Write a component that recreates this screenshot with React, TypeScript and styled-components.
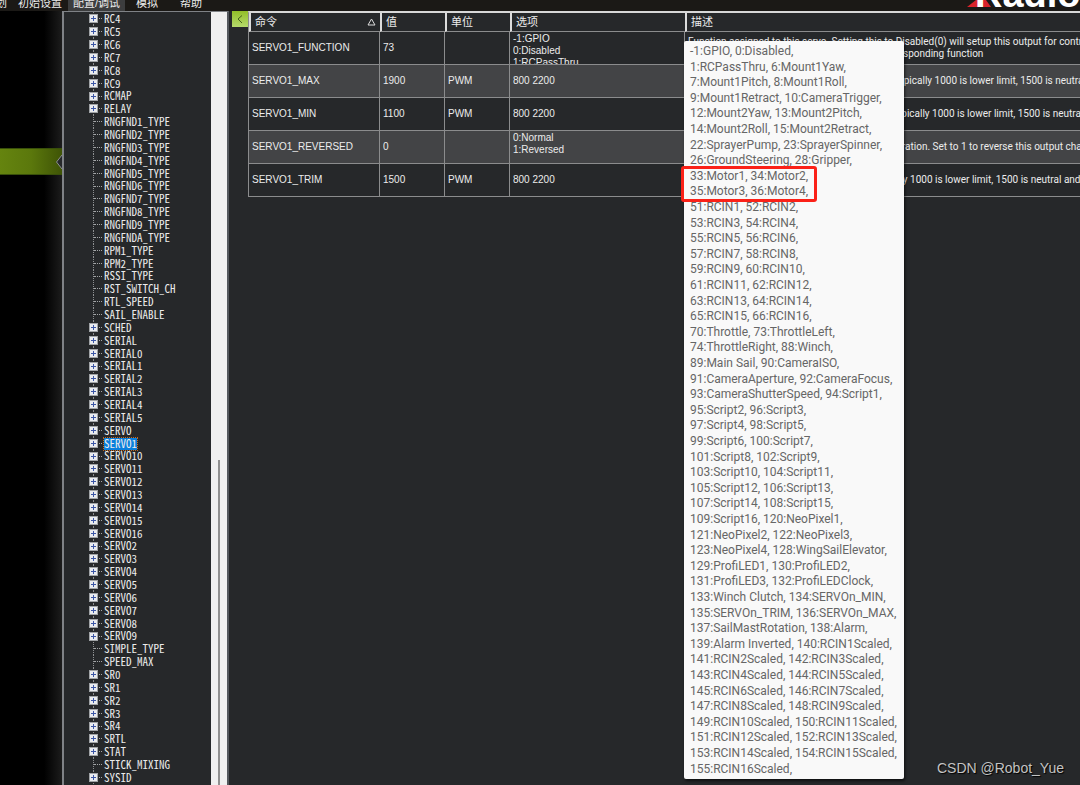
import React from "react";
import styled, { createGlobalStyle } from "styled-components";

const ui = `"Liberation Sans", "Noto Sans CJK SC", sans-serif`;
const line = "#8b8c8d";

const GlobalStyle = createGlobalStyle`
  * { box-sizing: border-box; }
  body { margin: 0; background: #26282a; color: #ececec; font: 10px/12px ${ui}; }
  button { font: inherit; color: inherit; border: 0; padding: 0; background: none; }
`;

const Shell = styled.div`
  position: relative;
  display: flex;
  flex-direction: column;
  height: 100vh;
  overflow: hidden;
`;

const TopBar = styled.header`
  flex: none;
  display: flex;
  justify-content: space-between;
  height: 11px;
  overflow: hidden;
  background: #1b1916;
`;

const Menu = styled.nav`
  display: flex;
  align-items: flex-end;
`;

const MenuItem = styled.button<{ $active?: boolean; $cut?: boolean }>`
  flex: none;
  display: flex;
  justify-content: flex-end;
  height: 16px;
  margin-left: ${(p) => (p.$active ? -5 : 0)}px;
  padding: 0 ${(p) => (p.$cut ? 0 : p.$active ? 5 : 11)}px;
  width: ${(p) => (p.$cut ? "7px" : "auto")};
  font-size: 11px;
  line-height: 16px;
  white-space: nowrap;
  background: ${(p) => (p.$active ? "#3c3d3e" : "none")};
`;

const Logo = styled.div`
  display: flex;
  align-items: flex-end;
  width: 113px;
  svg { flex: none; }
`;

const LogoText = styled.span`
  margin-left: -16px;
  font: bold 38px/34px ${ui};
  color: #fff;
`;

const Body = styled.div`
  flex: 1;
  display: flex;
  min-height: 0;
`;

const Sidebar = styled.aside`
  flex: none;
  width: 62px;
  padding-top: 137px;
  background: linear-gradient(90deg, #000 44px, #1c1c1c);
`;

const ActiveTab = styled.div`
  display: flex;
  align-items: center;
  justify-content: flex-end;
  height: 27px;
  border: solid #39500a;
  border-width: 1px 0;
  background: linear-gradient(90deg, #65840f, #5b780c 50%, #3f5406);
`;

const TreePanel = styled.section`
  flex: none;
  display: flex;
  width: 167px;
  border: solid #7f8286;
  border-width: 1px 2px 0;
  border-right-color: #54585d;
`;

const TreeList = styled.ul`
  flex: 1;
  margin: 0;
  padding: 0 0 0 25px;
  list-style: none;
`;

const TreeRow = styled.li`
  display: flex;
  align-items: center;
  height: 13px;
  background: linear-gradient(#8d8f91 50%, transparent 50%) 4px 0 / 1px 2px repeat-y;
  &:nth-child(7n) { height: 12px; }
`;

const Expander = styled.button`
  display: flex;
  width: 9px;
  height: 9px;
  background: #e9ebee;
  border: 1px solid #a0a3a6;
`;

const Dots = styled.span<{ $leaf: boolean }>`
  width: ${(p) => (p.$leaf ? 8 : 3)}px;
  margin: 0 2px 0 ${(p) => (p.$leaf ? 5 : 1)}px;
  border-top: 1px dotted #a3a5a7;
`;

const NodeName = styled.span<{ $selected: boolean }>`
  height: 12px;
  font: 11px/11px "Noto Sans Mono CJK SC", "Liberation Mono", monospace;
  background: ${(p) => (p.$selected ? "#0a7fdc" : "none")};
  outline: ${(p) => (p.$selected ? "1px dotted #c06a24" : "none")};
`;

const ScrollTrack = styled.div`
  display: flex;
  justify-content: center;
  width: 16px;
  padding-top: 448px;
  background: #f0f0f0;
`;

const ScrollThumb = styled.div`
  width: 2px;
  background: #909090;
`;

const Main = styled.main`
  flex: 1;
  display: flex;
  align-items: flex-start;
  min-width: 0;
  padding-left: 3px;
`;

const Collapse = styled.button`
  flex: none;
  display: flex;
  align-items: center;
  justify-content: center;
  width: 16px;
  height: 16px;
  background: linear-gradient(#92be28, #b5da6c);
`;

const ParamTable = styled.table`
  flex: 1;
  min-width: 0;
  width: 100%;
  table-layout: fixed;
  border-collapse: separate;
  border-spacing: 0;
  border-top: 2px solid #d8d8d8;
  border-left: 1px solid ${line};
`;

const Th = styled.th<{ $w?: number }>`
  width: ${(p) => (p.$w ? p.$w + "px" : "auto")};
  height: 19px;
  padding: 0 4px;
  border-left: 2px solid #dcdcdc;
  border-bottom: 1px solid ${line};
  font-size: 11px;
  font-weight: normal;
  text-align: left;
`;

const ThInner = styled.div`
  display: flex;
  justify-content: space-between;
  align-items: center;
`;

const Tr = styled.tr`
  &:nth-child(even) { background: #434446; }
`;

const Td = styled.td`
  height: 33px;
  padding: 0 0 0 3px;
  border-right: 1px solid ${line};
  border-bottom: 1px solid ${line};
  &:last-child {
    border-right: 0;
    font-family: Roboto, sans-serif;
  }
`;

const Clip = styled.div<{ $top?: boolean }>`
  display: flex;
  flex-direction: column;
  justify-content: ${(p) => (p.$top ? "flex-start" : "center")};
  height: 32px;
  padding-top: ${(p) => (p.$top ? 1 : 0)}px;
  overflow: hidden;
  white-space: pre;
`;

const Tooltip = styled.div`
  position: absolute;
  left: 684px;
  top: 41px;
  width: 220px;
  padding: 2px 6px 3px;
  border-radius: 2px;
  background: #f9f9f9;
  color: #666;
  font: 12px/16px Roboto, sans-serif;
  white-space: nowrap;
  box-shadow: 1px 2px 3px rgba(0, 0, 0, 0.6);
`;

const TipLine = styled.div`
  height: 16px;
  &:nth-child(5n + 2), &:nth-child(5n + 4) { height: 15px; }
`;

const Mark = styled.div`
  position: absolute;
  left: -3px;
  top: 125px;
  width: 136px;
  height: 36px;
  border: 3px solid #fb2118;
  border-radius: 3px;
`;

const Watermark = styled.div`
  position: absolute;
  right: 16px;
  bottom: 8px;
  font: 14px/18px ${ui};
  color: #c3c3c3;
  text-shadow: 1px 1px 1px #000;
`;

const groups = new Set(
  ("RC4 RC5 RC6 RC7 RC8 RC9 RCMAP RELAY SCHED SERIAL SERIAL0 SERIAL1 SERIAL2 SERIAL3 SERIAL4 SERIAL5 SERVO SERVO1 " +
    "SERVO10 SERVO11 SERVO12 SERVO13 SERVO14 SERVO15 SERVO16 SERVO2 SERVO3 SERVO4 SERVO5 SERVO6 SERVO7 SERVO8 SERVO9 " +
    "SR0 SR1 SR2 SR3 SR4 SRTL STAT SYSID").split(" ")
);

const nodes = (
  "RC4 RC5 RC6 RC7 RC8 RC9 RCMAP RELAY RNGFND1_TYPE RNGFND2_TYPE RNGFND3_TYPE RNGFND4_TYPE RNGFND5_TYPE RNGFND6_TYPE " +
  "RNGFND7_TYPE RNGFND8_TYPE RNGFND9_TYPE RNGFNDA_TYPE RPM1_TYPE RPM2_TYPE RSSI_TYPE RST_SWITCH_CH RTL_SPEED SAIL_ENABLE " +
  "SCHED SERIAL SERIAL0 SERIAL1 SERIAL2 SERIAL3 SERIAL4 SERIAL5 SERVO SERVO1 SERVO10 SERVO11 SERVO12 SERVO13 SERVO14 " +
  "SERVO15 SERVO16 SERVO2 SERVO3 SERVO4 SERVO5 SERVO6 SERVO7 SERVO8 SERVO9 SIMPLE_TYPE SPEED_MAX SR0 SR1 SR2 SR3 SR4 " +
  "SRTL STAT STICK_MIXING SYSID"
).split(" ");

const params = [
  { name: "SERVO1_FUNCTION", value: "73", unit: "", options: "-1:GPIO\n0:Disabled\n1:RCPassThru",
    text: "Function assigned to this servo. Setting this to Disabled(0) will setup this output for control by auto missions\nor MAVLink. any other value will enable the corresponding function" },
  { name: "SERVO1_MAX", value: "1900", unit: "PWM", options: "800 2200",
    text: "maximum PWM pulse width in microseconds. Typically 1000 is lower limit, 1500 is neutral and 2000 is upper limit." },
  { name: "SERVO1_MIN", value: "1100", unit: "PWM", options: "800 2200",
    text: "minimum PWM pulse width in microseconds. Typically 1000 is lower limit, 1500 is neutral and 2000 is upper limit." },
  { name: "SERVO1_REVERSED", value: "0", unit: "", options: "0:Normal\n1:Reversed",
    text: "Reverse servo operation. Set to 0 for normal operation. Set to 1 to reverse this output channel." },
  { name: "SERVO1_TRIM", value: "1500", unit: "PWM", options: "800 2200",
    text: "Trim PWM pulse width in microseconds. Typically 1000 is lower limit, 1500 is neutral and 2000 is upper limit." },
];

const functions = [
  "-1:GPIO, 0:Disabled,", "1:RCPassThru, 6:Mount1Yaw,", "7:Mount1Pitch, 8:Mount1Roll,", "9:Mount1Retract, 10:CameraTrigger,",
  "12:Mount2Yaw, 13:Mount2Pitch,", "14:Mount2Roll, 15:Mount2Retract,", "22:SprayerPump, 23:SprayerSpinner,",
  "26:GroundSteering, 28:Gripper,", "33:Motor1, 34:Motor2,", "35:Motor3, 36:Motor4,", "51:RCIN1, 52:RCIN2,",
  "53:RCIN3, 54:RCIN4,", "55:RCIN5, 56:RCIN6,", "57:RCIN7, 58:RCIN8,", "59:RCIN9, 60:RCIN10,", "61:RCIN11, 62:RCIN12,",
  "63:RCIN13, 64:RCIN14,", "65:RCIN15, 66:RCIN16,", "70:Throttle, 73:ThrottleLeft,", "74:ThrottleRight, 88:Winch,",
  "89:Main Sail, 90:CameraISO,", "91:CameraAperture, 92:CameraFocus,", "93:CameraShutterSpeed, 94:Script1,",
  "95:Script2, 96:Script3,", "97:Script4, 98:Script5,", "99:Script6, 100:Script7,", "101:Script8, 102:Script9,",
  "103:Script10, 104:Script11,", "105:Script12, 106:Script13,", "107:Script14, 108:Script15,", "109:Script16, 120:NeoPixel1,",
  "121:NeoPixel2, 122:NeoPixel3,", "123:NeoPixel4, 128:WingSailElevator,", "129:ProfiLED1, 130:ProfiLED2,",
  "131:ProfiLED3, 132:ProfiLEDClock,", "133:Winch Clutch, 134:SERVOn_MIN,", "135:SERVOn_TRIM, 136:SERVOn_MAX,",
  "137:SailMastRotation, 138:Alarm,", "139:Alarm Inverted, 140:RCIN1Scaled,", "141:RCIN2Scaled, 142:RCIN3Scaled,",
  "143:RCIN4Scaled, 144:RCIN5Scaled,", "145:RCIN6Scaled, 146:RCIN7Scaled,", "147:RCIN8Scaled, 148:RCIN9Scaled,",
  "149:RCIN10Scaled, 150:RCIN11Scaled,", "151:RCIN12Scaled, 152:RCIN13Scaled,", "153:RCIN14Scaled, 154:RCIN15Scaled,",
  "155:RCIN16Scaled,",
];

export default function App() {
  return (
    <Shell>
      <GlobalStyle />
      <TopBar>
        <Menu>
          <MenuItem $cut>划</MenuItem>
          <MenuItem>初始设置</MenuItem>
          <MenuItem $active>配置/调试</MenuItem>
          <MenuItem>模拟</MenuItem>
          <MenuItem>帮助</MenuItem>
        </Menu>
        <Logo>
          <svg width="24" height="11" viewBox="0 0 24 11"><path d="M0 7 L9 0 H19 L24 7 Z" fill="#d9242c" /></svg>
          <LogoText>Radio</LogoText>
        </Logo>
      </TopBar>
      <Body>
        <Sidebar>
          <ActiveTab>
            <svg width="6" height="14" viewBox="0 0 6 14"><path d="M6 0 L0.5 7 L6 14" fill="#26282a" stroke="#8d9093" /></svg>
          </ActiveTab>
        </Sidebar>
        <TreePanel>
          <TreeList role="tree">
            {nodes.map((n) => (
              <TreeRow key={n} role="treeitem" aria-selected={n === "SERVO1"}>
                {groups.has(n) && (
                  <Expander aria-label={"Expand " + n}>
                    <svg width="7" height="7" viewBox="0 0 7 7"><path d="M1 3.5H6M3.5 1V6" stroke="#3a55a5" /></svg>
                  </Expander>
                )}
                <Dots $leaf={!groups.has(n)} />
                <NodeName $selected={n === "SERVO1"}>{n}</NodeName>
              </TreeRow>
            ))}
          </TreeList>
          <ScrollTrack><ScrollThumb /></ScrollTrack>
        </TreePanel>
        <Main>
          <Collapse aria-label="Collapse">
            <svg width="6" height="9" viewBox="0 0 6 9"><path d="M5 0.5 L1 4 L5 8" fill="none" stroke="#44611a" /></svg>
          </Collapse>
          <ParamTable>
            <thead>
              <tr>
                <Th $w={131}>
                  <ThInner>
                    命令
                    <svg width="9" height="8" viewBox="0 0 9 8"><path d="M4.5 1 L8 7 H1 Z" fill="none" stroke="#dcdcdc" /></svg>
                  </ThInner>
                </Th>
                <Th $w={65}>值</Th>
                <Th $w={65}>单位</Th>
                <Th $w={175}>选项</Th>
                <Th>描述</Th>
              </tr>
            </thead>
            <tbody>
              {params.map((p) => (
                <Tr key={p.name}>
                  <Td><Clip>{p.name}</Clip></Td>
                  <Td><Clip>{p.value}</Clip></Td>
                  <Td><Clip>{p.unit}</Clip></Td>
                  <Td><Clip $top={p.options.includes("\n")}>{p.options}</Clip></Td>
                  <Td><Clip>{p.text}</Clip></Td>
                </Tr>
              ))}
            </tbody>
          </ParamTable>
        </Main>
      </Body>
      <Tooltip role="tooltip">
        {functions.map((f) => <TipLine key={f}>{f}</TipLine>)}
        <Mark />
      </Tooltip>
      <Watermark>CSDN @Robot_Yue</Watermark>
    </Shell>
  );
}
